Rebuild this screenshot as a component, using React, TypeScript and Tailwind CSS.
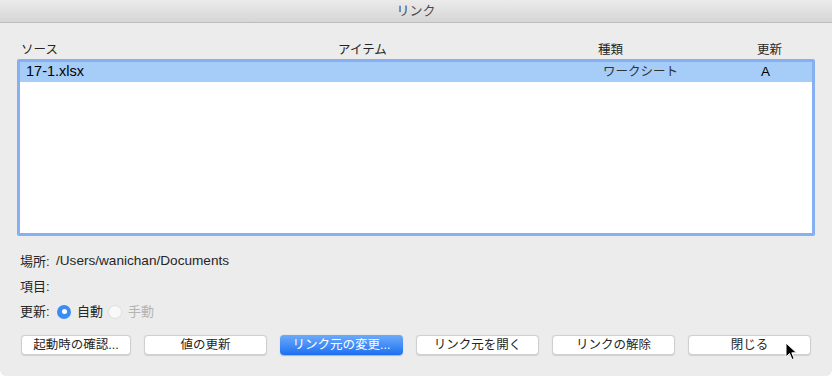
import React from "react";

const font = { fontFamily: '"Liberation Sans", "Noto Sans CJK JP", sans-serif' };

function Btn({ label, primary = false, w = "w-[123px]" }: { label: string; primary?: boolean; w?: string }) {
  return (
    <div
      className={`${w} h-[20px] rounded-[4px] flex items-center justify-center text-[12.5px] leading-none ${
        primary
          ? "bg-gradient-to-b from-[#6cabfb] to-[#1a6ff0] text-white shadow-[0_0.5px_1px_rgba(0,0,0,0.25)]"
          : "bg-white text-[#262626] border border-[#d0d0d0] shadow-[0_0.5px_1px_rgba(0,0,0,0.12)]"
      }`}
    >
      {label}
    </div>
  );
}

function Cursor() {
  return (
    <svg className="absolute left-[785px] top-[342px]" width="14" height="20" viewBox="0 0 14 20">
      <path d="M1 1 L1 15 L4.5 11.5 L7 17.5 L9.2 16.6 L6.8 10.8 L11.5 10.8 Z" fill="#000" stroke="#fff" strokeWidth="1" strokeLinejoin="round" />
    </svg>
  );
}

export default function App() {
  return (
    <div className="w-[832px] h-[376px] bg-white">
      <div className="relative w-[832px] h-[376px] bg-[#ececec] rounded-b-[6px] overflow-hidden text-[13px] text-[#262626]" style={font}>
        <div className="h-[23px] bg-gradient-to-b from-[#ebebeb] to-[#d6d6d6] border-b border-[#bdbdbd] flex items-center justify-center text-[#4a4a4a] text-[13px]">
          リンク
        </div>

        <div className="px-[17px]">
          <div className="flex mt-[19px] h-[17px] items-center pl-[4px] text-[12.5px]">
            <div className="w-[317px]">ソース</div>
            <div className="w-[260px]">アイテム</div>
            <div className="w-[159px]">種類</div>
            <div>更新</div>
          </div>

          <div className="h-[177px] border-[3px] border-[#87b0f3] rounded-[2px] bg-white">
            <div className="h-[20px] bg-[#a6cdf8] flex items-center pl-[6px]">
              <div className="w-[577px] text-[14.5px] text-black">17-1.xlsx</div>
              <div className="w-[158px] text-[12.5px] text-[#333]">ワークシート</div>
              <div className="text-[13.5px] text-black font-medium">A</div>
            </div>
          </div>

          <div className="pl-[3px] mt-[17px] flex flex-col gap-[8px]">
            <div className="h-[17px] flex items-center">
              <span className="w-[36px]">場所:</span>
              <span className="text-[13.6px]">/Users/wanichan/Documents</span>
            </div>
            <div className="h-[17px] flex items-center">
              <span className="w-[36px]">項目:</span>
            </div>
            <div className="h-[17px] flex items-center">
              <span className="w-[37px]">更新:</span>
              <span className="w-[14px] h-[14px] rounded-full bg-[#3c8cf6] flex items-center justify-center">
                <span className="w-[5px] h-[5px] rounded-full bg-white" />
              </span>
              <span className="ml-[6px]">自動</span>
              <span className="ml-[5px] w-[14px] h-[14px] rounded-full bg-white/70 border border-[#dedede]" />
              <span className="ml-[6px] text-[#b3b3b3]">手動</span>
            </div>
          </div>

          <div className="flex mt-[15px] pl-[4px] gap-[13px]">
            <Btn label="起動時の確認..." w="w-[110px]" />
            <Btn label="値の更新" />
            <Btn label="リンク元の変更..." primary />
            <Btn label="リンク元を開く" />
            <Btn label="リンクの解除" />
            <Btn label="閉じる" />
          </div>
        </div>
        <Cursor />
      </div>
    </div>
  );
}
